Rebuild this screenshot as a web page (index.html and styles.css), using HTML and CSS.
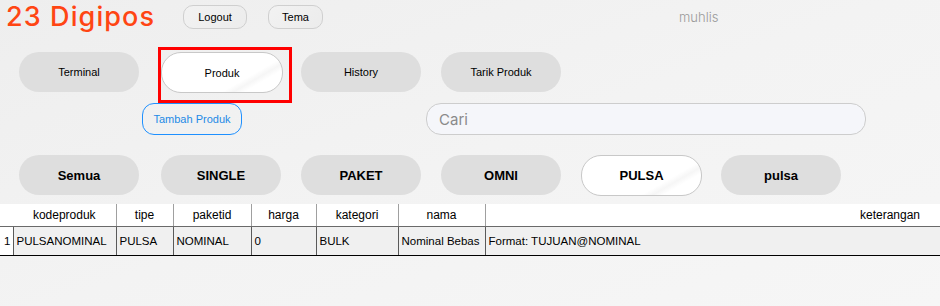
FILE: index.html
```html
<!DOCTYPE html>
<html lang="id">
<head>
<meta charset="utf-8">
<title>23 Digipos</title>
<link rel="stylesheet" href="styles.css">
</head>
<body>
<div class="app">
  <header class="topbar">
    <h1 class="brand">23 Digipos</h1>
    <button class="small-btn logout">Logout</button>
    <button class="small-btn tema">Tema</button>
    <span class="user">muhlis</span>
  </header>

  <nav class="tabs">
    <button class="pill first">Terminal</button>
    <div class="tab-wrap">
      <button class="pill active">Produk</button>
      <span class="highlight"></span>
    </div>
    <button class="pill">History</button>
    <button class="pill">Tarik Produk</button>
  </nav>

  <div class="tools">
    <button class="add-btn">Tambah Produk</button>
    <input class="search" type="text" placeholder="Cari">
  </div>

  <div class="cats">
    <button class="pill cat first">Semua</button>
    <button class="pill cat">SINGLE</button>
    <button class="pill cat">PAKET</button>
    <button class="pill cat">OMNI</button>
    <button class="pill cat active">PULSA</button>
    <button class="pill cat">pulsa</button>
  </div>

  <div class="table-box">
    <table class="grid">
      <colgroup>
        <col class="c0"><col class="c1"><col class="c2"><col class="c3"><col class="c4"><col class="c5"><col class="c6"><col class="c7">
      </colgroup>
      <thead>
        <tr>
          <th class="corner"></th>
          <th>kodeproduk</th>
          <th>tipe</th>
          <th>paketid</th>
          <th>harga</th>
          <th>kategori</th>
          <th>nama</th>
          <th>keterangan</th>
        </tr>
      </thead>
      <tbody>
        <tr>
          <td class="num">1</td>
          <td>PULSANOMINAL</td>
          <td>PULSA</td>
          <td>NOMINAL</td>
          <td>0</td>
          <td>BULK</td>
          <td>Nominal Bebas</td>
          <td>Format: TUJUAN@NOMINAL</td>
        </tr>
      </tbody>
    </table>
  </div>
</div>
</body>
</html>
```

FILE: styles.css
```css
* { box-sizing: border-box; }

html, body {
  margin: 0;
  padding: 0;
  width: 940px;
  height: 306px;
  overflow: hidden;
}

body {
  background: linear-gradient(160deg, #eeeeee 0%, #f3f3f3 50%, #f6f6f6 100%);
  font-family: "Liberation Sans", Arial, sans-serif;
  color: #000;
}

button {
  font-family: "Liberation Sans", Arial, sans-serif;
  cursor: pointer;
  padding: 0;
}

.app {
  display: flex;
  flex-direction: column;
}

/* ---------- top bar ---------- */
.topbar {
  display: flex;
  align-items: flex-start;
  height: 34px;
  padding-left: 6px;
}

.brand {
  margin: 0;
  width: 177px;
  height: 33px;
  font-family: "Inter", "Noto Sans", sans-serif;
  font-weight: 500;
  font-size: 27px;
  line-height: 33px;
  color: #ff4513;
  letter-spacing: 1.1px;
  white-space: nowrap;
}

.small-btn {
  margin-top: 5px;
  height: 24px;
  border: 1px solid #cfcfcf;
  border-radius: 10px;
  background: linear-gradient(135deg, #f2f2f2, #ececec);
  font-size: 11px;
  color: #000;
}

.logout { width: 64px; }
.tema { width: 55px; margin-left: 21px; }

.user {
  margin-left: 356px;
  margin-top: 9px;
  font-family: "Inter", "Noto Sans", sans-serif;
  font-weight: 300;
  font-size: 13px;
  color: #9a9a9a;
}

/* ---------- nav tabs ---------- */
.tabs {
  display: flex;
  gap: 20px;
  padding-left: 19px;
  margin-top: 18px;
  height: 41px;
}

.pill {
  width: 120px;
  height: 40px;
  border: none;
  border-radius: 20px;
  background: #dedede;
  font-size: 11px;
  color: #000;
}

.pill.first { margin-right: 2px; }

.pill.active {
  width: 122px;
  height: 41px;
  border: 1px solid #c8c8c8;
  background: linear-gradient(150deg, #ffffff 0%, #ffffff 68%, #f6f6f6 74%, #ffffff 80%, #ffffff 100%);
}

.tab-wrap {
  position: relative;
  display: flex;
  margin-right: -2px;
}

.highlight {
  position: absolute;
  left: -3px;
  top: -5px;
  width: 134px;
  height: 56px;
  border: 3px solid #ff0000;
  pointer-events: none;
}

/* ---------- tools row ---------- */
.tools {
  display: flex;
  align-items: center;
  margin-top: 10px;
  padding-left: 142px;
  height: 32px;
}

.add-btn {
  width: 100px;
  height: 32px;
  border: 1px solid #1e90ff;
  border-radius: 12px;
  background: transparent;
  color: #1e8ae6;
  font-size: 11px;
}

.search {
  margin-left: 184px;
  width: 440px;
  height: 32px;
  border: 1px solid #cdcdcd;
  border-radius: 15px;
  background: #f5f6fa;
  padding: 0 12px;
  font-family: "Inter", "Noto Sans", sans-serif;
  font-size: 15px;
  outline: none;
}

.search::placeholder {
  color: #8a8a8a;
  font-weight: 400;
}

/* ---------- categories ---------- */
.cats {
  display: flex;
  gap: 20px;
  padding-left: 19px;
  margin-top: 20px;
  height: 41px;
}

.pill.cat {
  font-size: 13px;
  font-weight: bold;
}

.pill.cat.active {
  width: 121px;
  margin-right: -1px;
}

/* ---------- table ---------- */
.table-box {
  margin-top: 8px;
  width: 940px;
  overflow: hidden;
}

.grid {
  border-collapse: collapse;
  table-layout: fixed;
  width: 1295px;
  font-family: "Liberation Sans", Arial, sans-serif;
  font-size: 11.5px;
}

.c0 { width: 13px; }
.c1 { width: 103px; }
.c2 { width: 57px; }
.c3 { width: 78px; }
.c4 { width: 65px; }
.c5 { width: 82px; }
.c6 { width: 87px; }
.c7 { width: 810px; }

.grid th {
  height: 22px;
  background: #ffffff;
  font-weight: normal;
  font-size: 12px;
  text-align: center;
  border-right: 1px solid #a0a0a0;
  border-bottom: 1px solid #6a6a6a;
  padding: 0;
  white-space: nowrap;
}

.grid th.corner { border-right: none; }

.grid td {
  height: 29px;
  background: #f0f0f0;
  border-right: 1px solid #5a5a5a;
  border-bottom: 1px solid #000;
  padding: 0 0 0 3px;
  white-space: nowrap;
  overflow: hidden;
}

.grid td.num {
  background: #ffffff;
  padding-left: 4px;
  border-right: 1px solid #5a5a5a;
}
```
